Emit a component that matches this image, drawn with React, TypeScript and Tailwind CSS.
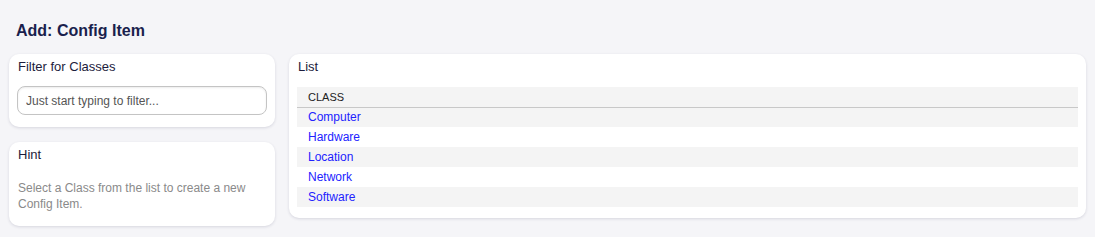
import React from 'react'

const classes = ['Computer', 'Hardware', 'Location', 'Network', 'Software']

function Card({ title, className, children }: { title: string; className?: string; children?: React.ReactNode }) {
  return (
    <section
      className={`rounded-[10px] bg-white px-[8px] pt-[5px] shadow-[0_1px_3px_rgba(40,40,80,0.15)] ${className ?? ''}`}
    >
      <h2 className="pl-px text-[13px] leading-[16px] text-[#1c1c3c]">{title}</h2>
      {children}
    </section>
  )
}

export default function App() {
  return (
    <div
      className="h-[237px] w-[1095px] bg-[#f5f5f8] px-[9px] pt-[21px]"
      style={{ fontFamily: '"Liberation Sans", Arial, sans-serif' }}
    >
      <h1 className="pl-[7px] text-[16px] font-bold leading-[20px] text-[#1a1f4d]">Add: Config Item</h1>

      <div className="mt-[13px] flex gap-[14px]">
        <div className="flex w-[266px] flex-col gap-[15px]">
          <Card title="Filter for Classes" className="h-[73px]">
            <input
              type="text"
              placeholder="Just start typing to filter..."
              className="mt-[11px] h-[29px] w-[250px] rounded-[8px] border border-[#c4c4c4] px-[8px] text-[12px] text-[#333] shadow-[inset_0_1px_2px_rgba(0,0,0,0.08)] outline-none placeholder:text-[#555]"
            />
          </Card>
          <Card title="Hint" className="h-[84px]">
            <p className="mt-[17px] pl-px text-[12px] leading-[16px] text-[#8a8a8a]">
              Select a Class from the list to create a new Config Item.
            </p>
          </Card>
        </div>

        <Card title="List" className="h-[164px] flex-1">
          <table className="mt-[12px] w-full border-collapse text-[12px]">
            <thead>
              <tr className="h-[20px] border-b border-[#c8c8c8] bg-[#f4f4f4]">
                <th className="pl-[11px] text-left text-[11px] font-normal text-[#222]">CLASS</th>
              </tr>
            </thead>
            <tbody>
              {classes.map((c, i) => (
                <tr key={c} className={`h-[20px] ${i % 2 === 0 ? 'bg-[#f4f4f4]' : 'bg-white'}`}>
                  <td className="pl-[11px] text-[#2222ff]">{c}</td>
                </tr>
              ))}
            </tbody>
          </table>
        </Card>
      </div>
    </div>
  )
}
